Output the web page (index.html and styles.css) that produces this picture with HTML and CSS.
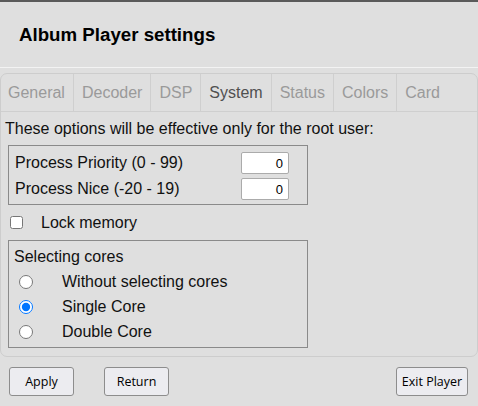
FILE: index.html
```html
<!DOCTYPE html>
<html>
<head>
<meta charset="utf-8">
<link rel="stylesheet" href="styles.css">
</head>
<body>
<div class="header">Album Player settings</div>
<div class="panel">
  <div class="tabs">
    <div class="tab">General</div>
    <div class="tab">Decoder</div>
    <div class="tab">DSP</div>
    <div class="tab active">System</div>
    <div class="tab">Status</div>
    <div class="tab">Colors</div>
    <div class="tab last">Card</div>
  </div>
  <div class="content">
    <div class="note">These options will be effective only for the root user:</div>
    <div class="box box-proc">
      <div class="row"><span>Process Priority (0 - 99)</span><input class="num" type="text" value="0"></div>
      <div class="row"><span>Process Nice (-20 - 19)</span><input class="num" type="text" value="0"></div>
    </div>
    <label class="lock"><input type="checkbox" class="chk"><span>Lock memory</span></label>
    <div class="box box-cores">
      <div class="legend">Selecting cores</div>
      <label class="radio-row"><input type="radio" name="cores" class="rad"><span>Without selecting cores</span></label>
      <label class="radio-row"><input type="radio" name="cores" class="rad" checked><span>Single Core</span></label>
      <label class="radio-row"><input type="radio" name="cores" class="rad"><span>Double Core</span></label>
    </div>
  </div>
</div>
<div class="buttons">
  <button class="btn btn-apply">Apply</button>
  <button class="btn btn-return">Return</button>
  <span class="spacer"></span>
  <button class="btn btn-exit">Exit Player</button>
</div>
</body>
</html>
```
FILE: styles.css
```css
html, body {
  margin: 0;
  padding: 0;
}
body {
  background: #dfdfdf;
  border-top: 2px solid #5a5a5a;
  font-family: "Liberation Sans", Arial, sans-serif;
  font-size: 16px;
  color: #111;
  width: 478px;
  height: 404px;
  overflow: hidden;
}
.header {
  height: 65px;
  display: flex;
  align-items: center;
  padding-left: 19px;
  font-weight: bold;
  font-size: 18.7px;
  color: #000;
  border-bottom: 1px solid #f3f3f3;
}
.panel {
  margin-top: 5px;
  height: 284px;
  border: 1px solid #cdcdcd;
  border-radius: 7px;
  box-sizing: border-box;
}
.tabs {
  display: flex;
  height: 38px;
  border-bottom: 1px solid #cfcfcf;
  box-sizing: border-box;
}
.tab {
  display: flex;
  align-items: center;
  padding: 0 8px 0 8px;
  color: #9a9a9a;
  border-right: 1px solid #cfcfcf;
}
.tab:first-child {
  padding-left: 7px;
}
.tab.last {
  border-right: none;
}
.tab.active {
  color: #505050;
}
.content {
  padding: 0 0 0 4px;
}
.note {
  height: 33px;
  display: flex;
  align-items: center;
  padding-top: 1px;
  box-sizing: border-box;
}
.box {
  margin-left: 3px;
  width: 300px;
  border: 1px solid #8a8a8a;
  box-sizing: border-box;
}
.box-proc {
  height: 60px;
  padding: 4px 0 0 6px;
}
.row {
  height: 26px;
  display: flex;
  align-items: center;
  justify-content: space-between;
  padding-right: 18px;
}
.num {
  width: 48px;
  height: 22px;
  box-sizing: border-box;
  border: 1px solid #ababab;
  border-radius: 2px;
  background: #fff;
  text-align: right;
  font-family: "Liberation Sans", Arial, sans-serif;
  font-size: 13px;
  padding: 0 5px;
  color: #000;
}
.lock {
  display: flex;
  align-items: center;
  height: 35px;
}
.chk {
  margin: 0 18px 0 5px;
  width: 13px;
  height: 13px;
}
.box-cores {
  height: 108px;
  padding: 4px 0 0 5px;
}
.legend {
  height: 24px;
  display: flex;
  align-items: center;
}
.radio-row {
  display: flex;
  align-items: center;
  height: 25px;
}
.rad {
  margin: 0 29px 0 5px;
  width: 14px;
  height: 14px;
}
.buttons {
  display: flex;
  align-items: center;
  padding: 10px 10px 0 9px;
}
.btn {
  height: 29px;
  background: #ececf0;
  border: 1px solid #8d8d8d;
  border-radius: 3px;
  font-family: "Open Sans", "Noto Sans", sans-serif;
  font-size: 12.5px;
  color: #000;
  padding: 0;
}
.btn-apply {
  width: 65px;
}
.btn-return {
  width: 65px;
  margin-left: 30px;
}
.btn-exit {
  width: 72px;
}
.spacer {
  flex: 1;
}
```
